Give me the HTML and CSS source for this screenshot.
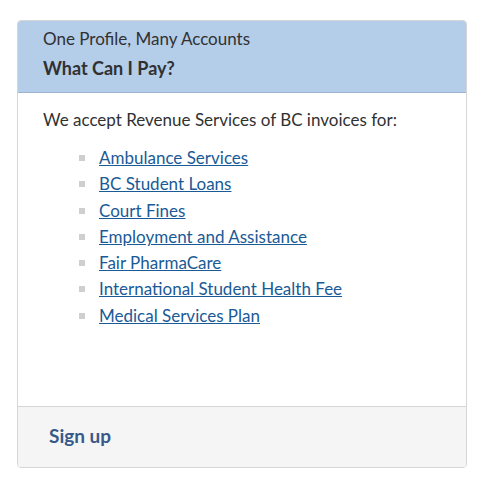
FILE: index.html
```html
<!DOCTYPE html>
<html>
<head>
<meta charset="utf-8">
<link rel="stylesheet" href="styles.css">
</head>
<body>
<div class="page">
  <div class="card">
    <div class="card-header">
      <div class="subtitle">One Profile, Many Accounts</div>
      <div class="title">What Can I Pay?</div>
    </div>
    <div class="card-body">
      <p class="intro">We accept Revenue Services of BC invoices for:</p>
      <ul class="list">
        <li><a href="#">Ambulance Services</a></li>
        <li><a href="#">BC Student Loans</a></li>
        <li><a href="#">Court Fines</a></li>
        <li><a href="#">Employment and Assistance</a></li>
        <li><a href="#">Fair PharmaCare</a></li>
        <li><a href="#">International Student Health Fee</a></li>
        <li><a href="#">Medical Services Plan</a></li>
      </ul>
    </div>
    <div class="card-footer">
      <a class="signup" href="#">Sign up</a>
    </div>
  </div>
</div>
</body>
</html>
```

FILE: styles.css
```css
html, body {
  margin: 0;
  padding: 0;
  background: #fff;
}
body {
  font-family: "Lato", "Open Sans", sans-serif;
  color: #313132;
  font-size: 17px;
}
.page {
  padding: 20px 18px 0 17px;
}
.card {
  width: 448px;
  border: 1px solid #d6d6d6;
  border-radius: 4px;
  overflow: hidden;
  display: flex;
  flex-direction: column;
  height: 446px;
}
.card-header {
  background: #b4cde9;
  border-bottom: 1px solid #9eb3cd;
  padding: 7px 25px 12px 25px;
  height: 52px;
}
.subtitle {
  font-size: 17px;
  line-height: 22px;
}
.title {
  font-size: 18px;
  font-weight: bold;
  line-height: 22px;
  margin-top: 7px;
}
.card-body {
  flex: 1;
  padding: 16px 25px 0 25px;
}
.intro {
  margin: 0;
  line-height: 22px;
}
.list {
  list-style: none;
  margin: 16px 0 0 0;
  padding: 0;
}
.list li {
  position: relative;
  line-height: 22px;
  margin-bottom: 4.3px;
  padding-left: 56px;
}
.list li::before {
  content: "";
  position: absolute;
  left: 36px;
  top: 8px;
  width: 6px;
  height: 6px;
  background: #cfcfcf;
}
.list a {
  color: #1a5a96;
  text-decoration: underline;
}
.card-footer {
  background: #f5f5f5;
  border-top: 1px solid #d6d6d6;
  height: 60px;
  padding: 0 31px;
  display: flex;
  align-items: center;
}
.signup {
  color: #38598a;
  font-weight: bold;
  text-decoration: none;
  font-size: 19px;
  margin-top: -4px;
}
```
